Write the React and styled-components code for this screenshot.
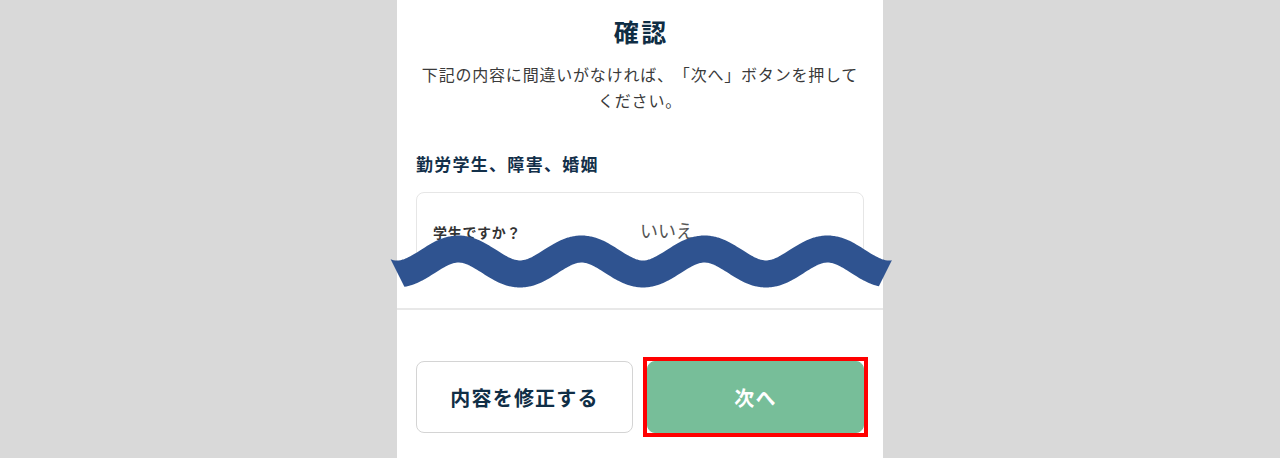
import React from "react";
import styled, { createGlobalStyle } from "styled-components";

const GlobalStyle = createGlobalStyle`
    html, body {
        margin: 0;
        padding: 0;
        background: #d9d9d9;
    }
    body {
        font-family: "Noto Sans CJK JP", "Noto Sans", sans-serif;
        color: #333;
        text-spacing-trim: space-all;
    }
`;

// Styled Components
const Page = styled.div`
    min-height: 458px;
`;

const Panel = styled.main`
    position: relative;
    width: 486px;
    min-height: 458px;
    margin: 0 auto;
    background: #fff;
    display: flex;
    flex-direction: column;
`;

const Top = styled.section`
    padding: 14px 19px 0;
`;

const Title = styled.h1`
    margin: 0;
    font-size: 25px;
    line-height: 35px;
    font-weight: 700;
    text-align: center;
    letter-spacing: 0.1em;
    text-indent: 0.1em;
    color: #0f2d44;
`;

const Lead = styled.p`
    margin: 12px 0 0;
    font-size: 16px;
    line-height: 26px;
    text-align: center;
    letter-spacing: 0.05em;
    color: #3a3a3a;
    text-spacing-trim: space-all;
`;

const Cut = styled.div`
    margin-top: 39px;
    height: 118px;
    overflow: hidden;
`;

const SectionTitle = styled.h2`
    margin: 0;
    font-size: 17px;
    line-height: 24px;
    font-weight: 700;
    letter-spacing: 0.075em;
    color: #13304a;
`;

const Card = styled.div`
    margin-top: 16px;
    border: 1px solid #e6e6e6;
    border-radius: 8px;
    padding: 25px 16px 80px;
`;

const Row = styled.div`
    display: grid;
    grid-template-columns: 207px 1fr;
    align-items: baseline;
`;

const Label = styled.span`
    font-size: 14px;
    line-height: 20px;
    font-weight: 700;
    letter-spacing: 0.05em;
    color: #333;
`;

const Value = styled.span`
    font-size: 18px;
    line-height: 24px;
    color: #555;
`;

const Divider = styled.hr`
    margin: 38px 0 0;
    border: none;
    height: 2px;
    background: #e8e8e8;
`;

const Footer = styled.div`
    padding: 51px 19px 0;
    display: grid;
    grid-template-columns: 1fr 1fr;
    gap: 14px;
`;

const Button = styled.button`
    position: relative;
    height: 72px;
    border-radius: 8px;
    font-family: inherit;
    font-size: 20px;
    font-weight: 700;
    letter-spacing: 0.06em;
    cursor: pointer;
    border: 1px solid ${({ $primary }) => ($primary ? "#77be99" : "#d4d4d4")};
    background: ${({ $primary }) => ($primary ? "#77be99" : "#fff")};
    color: ${({ $primary }) => ($primary ? "#fff" : "#102e46")};
`;

const Highlight = styled.span`
    position: absolute;
    inset: -5px;
    border: 4px solid #ff0000;
    pointer-events: none;
`;

const WaveSvg = styled.svg`
    position: absolute;
    left: -21px;
    top: 228px;
    pointer-events: none;
`;

// omission mark drawn over the cut
const wavePoints = Array.from({ length: 280 }, (_, i) => {
    const x = -10 + i * 2;
    const y = 33.5 - 12.5 * Math.cos((2 * Math.PI * (x - 82.5)) / 123);
    return `${x},${y.toFixed(2)}`;
}).join(" ");

const Wave = () => (
    <WaveSvg width="532" height="74" viewBox="0 0 532 74">
        <defs>
            <clipPath id="wave-ends">
                <polygon points="0,2 531,2 496,72 35,72" />
            </clipPath>
        </defs>
        <polyline
            points={wavePoints}
            fill="none"
            stroke="#2f5390"
            strokeWidth="27"
            strokeLinejoin="round"
            clipPath="url(#wave-ends)"
        />
    </WaveSvg>
);

const App = () => {
    return (
        <Page>
            <GlobalStyle />
            <Panel>
                <Top>
                    <Title>確認</Title>
                    <Lead>下記の内容に間違いがなければ、「次へ」ボタンを押してください。</Lead>
                    <Cut>
                        <SectionTitle>勤労学生、障害、婚姻</SectionTitle>
                        <Card>
                            <Row>
                                <Label>学生ですか？</Label>
                                <Value>いいえ</Value>
                            </Row>
                        </Card>
                    </Cut>
                </Top>
                <Divider />
                <Footer>
                    <Button type="button">内容を修正する</Button>
                    <Button type="button" $primary>
                        次へ
                        <Highlight />
                    </Button>
                </Footer>
                <Wave />
            </Panel>
        </Page>
    );
};

export default App;
